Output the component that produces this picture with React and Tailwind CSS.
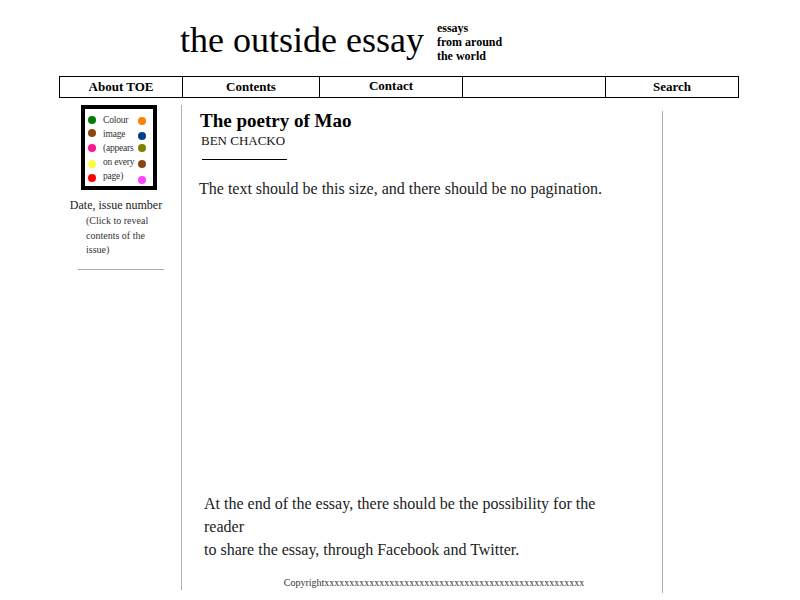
import React from 'react';

const leftDots = [
  ['bg-[#008000]', 'mt-[7px]'],
  ['bg-[#8b4513]', 'mt-[5px]'],
  ['bg-[#ff1493]', 'mt-[7px]'],
  ['bg-[#ffff40]', 'mt-[8px]'],
  ['bg-[#ff0000]', 'mt-[6px]'],
];

const rightDots = [
  ['bg-[#ff8000]', 'mt-[8px]'],
  ['bg-[#00408a]', 'mt-[7px]'],
  ['bg-[#808000]', 'mt-[4px]'],
  ['bg-[#8b4513]', 'mt-[8px]'],
  ['bg-[#ff44ff]', 'mt-[8px]'],
];

const navCells = [
  ['About TOE', 'w-[122px] pt-[2px]'],
  ['Contents', 'w-[137px] pt-[2px]'],
  ['Contact', 'w-[143px] pt-[1px]'],
  ['', 'w-[143px]'],
  ['Search', 'flex-1 pt-[2px]'],
];

function DotColumn({ dots }) {
  return (
    <div className="flex flex-col w-[8px] shrink-0">
      {dots.map(([color, gap], i) => (
        <span key={i} className={`block w-[8px] h-[8px] rounded-full ${color} ${gap}`} />
      ))}
    </div>
  );
}

export default function App() {
  return (
    <div className="w-[800px] h-[600px] bg-white text-black overflow-hidden font-['Liberation_Serif','Times_New_Roman',serif]">
      <header className="flex items-start pl-[180px] pt-[20px]">
        <h1 className="text-[36px] leading-[40px] font-normal">the outside essay</h1>
        <p className="ml-[13px] mt-[1px] text-[12px] leading-[14px] font-bold">
          essays<br />from around<br />the world
        </p>
      </header>

      <nav className="ml-[59px] w-[680px] mt-[13px] h-[22px] flex border border-black text-[13px] font-bold">
        {navCells.map(([label, cls], i) => (
          <div key={i} className={`${cls} text-center leading-[16px] ${i > 0 ? 'border-l border-black' : ''}`}>
            {label}
          </div>
        ))}
      </nav>

      <div className="flex pl-[59px]">
        <aside className="w-[123px] mt-[7px] h-[485px] border-r border-[#b0b0b0] flex flex-col">
          <div className="ml-[22px] w-[76px] h-[85px] border-4 border-black flex pl-[3px] text-[9.5px] leading-[14px] tracking-[-0.2px] text-[#333]">
            <DotColumn dots={leftDots} />
            <p className="ml-[7px] mt-[4px] w-[35px] shrink-0 whitespace-nowrap">
              Colour<br />image<br />(appears<br />on every<br />page)
            </p>
            <DotColumn dots={rightDots} />
          </div>
          <p className="mt-[8px] text-center pr-[8px] text-[12px] leading-[15px] text-[#222]">Date, issue number</p>
          <p className="ml-[27px] mt-[1px] text-[10px] leading-[14.5px] text-[#333]">
            (Click to reveal<br />contents of the<br />issue)
          </p>
          <div className="ml-[19px] mt-[11px] w-[86px] border-t border-[#aaa]" />
        </aside>

        <main className="w-[481px] mt-[13px] h-[482px] border-r border-[#b0b0b0] flex flex-col text-[#222]">
          <h2 className="ml-[18px] text-[19px] leading-[20px] font-bold text-black">The poetry of Mao</h2>
          <p className="ml-[19px] text-[13px] leading-[20px] text-[#111]">BEN CHACKO</p>
          <div className="ml-[20px] mt-[8px] w-[85px] border-t border-black" />
          <p className="ml-[17px] mt-[17px] text-[16px] leading-[23px]">
            The text should be this size, and there should be no pagination.
          </p>
          <p className="ml-[22px] mt-[292px] text-[16px] leading-[23px]">
            At the end of the essay, there should be the possibility for the<br />reader<br />to share the essay, through Facebook and Twitter.
          </p>
          <p className="mt-[15px] text-center pl-[24px] text-[10px] leading-[14px] text-[#333]">
            Copyrightxxxxxxxxxxxxxxxxxxxxxxxxxxxxxxxxxxxxxxxxxxxxxxxxxxxx
          </p>
        </main>
      </div>
    </div>
  );
}
